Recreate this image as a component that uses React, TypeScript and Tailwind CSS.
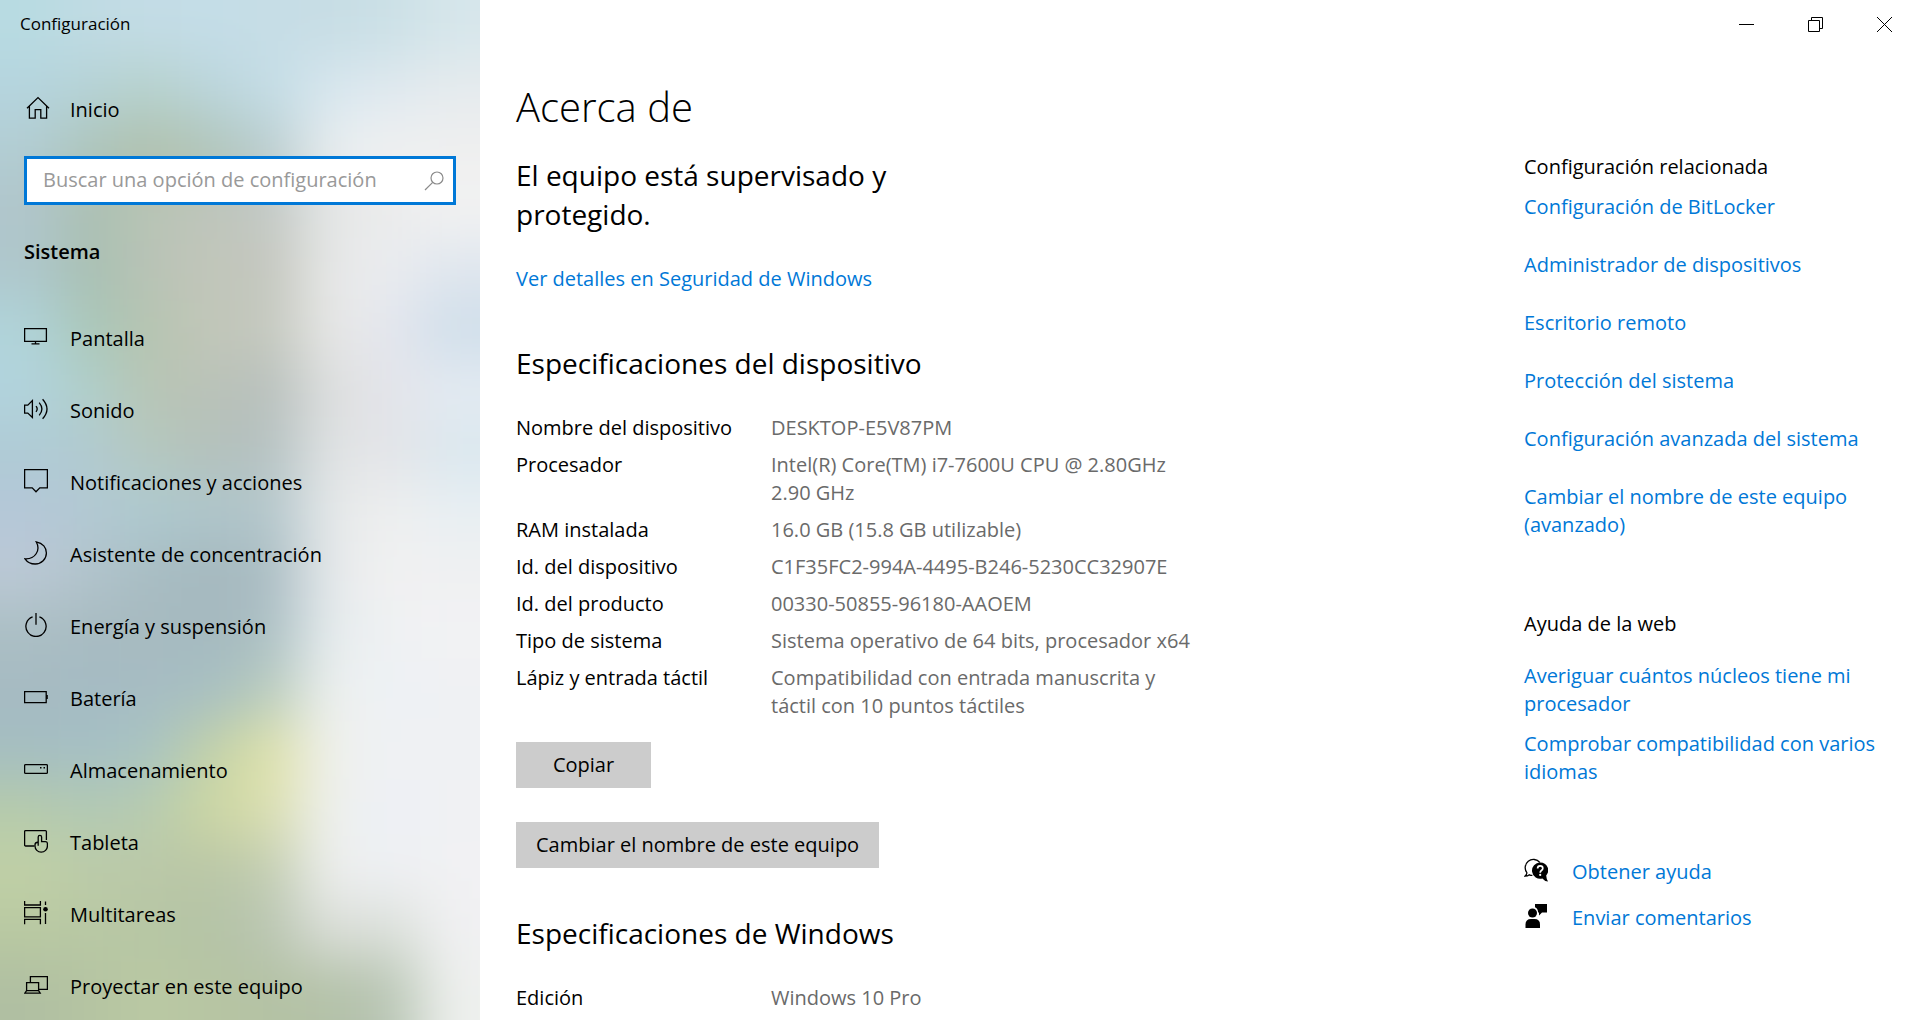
import React, { useState } from 'react';

interface IconProps {
  children: React.ReactNode;
}

interface NavItem {
  label: string;
  icon: React.ReactNode;
}

interface Spec {
  name: string;
  value: string;
}

// Colour samples of the blurred wallpaper, one entry per 60x60 cell
const wallpaper = [
  'b8dbe2 c0dbe3 c3dce6 c4dde7 c6dde6 c7dde5 cbe0e6 d6e6eb',
  'b5d4de b5d2d6 b6d2cc bbd5dc c4dde6 d8e7ef e0e9ef e6ebee',
  'b2cdd3 adc4ba b0c0ac b0c5b8 b8cccf e9eef0 f0f1f2 efefef',
  'b0c5cb abc0b2 b9c4b5 bfc5bb c3c8c4 e4e6e6 ebebeb f2f2f2',
  'aec7cc a8bfb2 b9c3b6 c1c6ba c3c6be e8e9e8 eaecf0 dfe6ee',
  'b0d4da a9c7b8 b6c4b0 c2c7b9 c4c8be e8e8e7 e4e6ee cfdeea',
  'b2d3dd b0cfca b8c5b4 bac2b8 b7bfbc dddfde e4e4ea e4ebf2',
  'afcbd5 b1cad0 b5c8be b3c0bb b5c1c1 e0e3e4 e3e4e8 dae7ee',
  'b4c7d8 b2c9d3 aecad0 afc6cb b4c7cc e6e9ea eeefef e8eff3',
  'bcc9d6 b2c4cc a8bdc3 a5b8be a9bcc2 e6e9eb f1f1f1 eff0f2',
  'abbfc4 a8bbc1 a7bac0 a5b9bf abbfc4 e6ecee eff1f3 f2f2f3',
  'a6bac2 a5bbc3 a6bcc3 a6bfc3 b8cbbd edf0ef edf1f5 eff1f3',
  'a4bec2 a5bfc5 a8c4c2 c2d1a8 dfe2a8 eff0ec eff1f4 eff1f3',
  'b6cbab b2c9b4 b8ccae cdd7a3 dbdfb0 eef0ee edf0f5 f0f1f3',
  'c0d0a6 bccba8 bbc8a8 b9c6a6 c2cdb2 eeefee eef0f4 f1f1f3',
  'b9c9a2 b8c8a4 b6c6a4 b4c3a6 b9c5b2 dcdfda dbe0da f0f0f2',
  'b0bfa2 b5c4a2 bac9a3 b7c5a3 b4c2a4 b3c1a8 b8c5b4 eef0ee',
].map((row) => row.split(' '));

function Wallpaper() {
  // two extra cells on every side keep the blur from fading at the edges
  const cells = [];
  for (let r = -2; r < 19; r++) {
    for (let c = -2; c < 10; c++) {
      const row = wallpaper[Math.min(16, Math.max(0, r))];
      const color = row[Math.min(7, Math.max(0, c))];
      cells.push(<rect key={`${r}-${c}`} x={c * 60} y={r * 60} width={61} height={61} fill={`#${color}`} />);
    }
  }

  return (
    <svg
      className="absolute inset-0 h-full w-full"
      viewBox="0 0 480 1020"
      preserveAspectRatio="none"
      aria-hidden="true"
    >
      <filter
        id="acrylic"
        filterUnits="userSpaceOnUse"
        x="-120"
        y="-120"
        width="720"
        height="1260"
        colorInterpolationFilters="sRGB"
      >
        <feGaussianBlur stdDeviation="28" />
      </filter>
      <g filter="url(#acrylic)">{cells}</g>
    </svg>
  );
}

function Icon({ children }: IconProps) {
  return (
    <svg
      className="h-6 w-6 shrink-0"
      viewBox="0 0 24 24"
      fill="none"
      stroke="currentColor"
      strokeWidth="1.3"
      aria-hidden="true"
    >
      {children}
    </svg>
  );
}

const navItems: NavItem[] = [
  {
    label: 'Pantalla',
    icon: <path d="M.6 3.6h21.8v12.8H.6zM11.5 16.4v2.2M7.5 18.9h8" />,
  },
  {
    label: 'Sonido',
    icon: (
      <path d="M.6 8.1h3.2L8.4 3.6v16.8l-4.6-4.3H.6zM12 9.2q2.4 2.8 0 5.6M15.2 5.6q5.4 6.4 0 12.8M18.6 2.2q8.8 9.8 0 19.6" />
    ),
  },
  {
    label: 'Notificaciones y acciones',
    icon: <path d="M.6.7h22.8v18.2h-7.6L12 22.8l-3.8-3.9H.6z" />,
  },
  {
    label: 'Asistente de concentración',
    icon: <path d="M12.2.8C19 2 22.4 6.8 22.4 12c0 6-4.9 11-11.2 11-4.2 0-8-2-10.2-5.2C11 18.4 17 9.4 12.2.8z" />,
  },
  {
    label: 'Energía y suspensión',
    icon: <path d="M12 0v11.8M15.4 3.9a10.1 10.1 0 1 1-6.8 0" />,
  },
  {
    label: 'Batería',
    icon: (
      <>
        <path d="M.6 6.6h21.6v11H.6z" />
        <path d="M22.2 10h1.6v4h-1.6z" fill="currentColor" stroke="none" />
      </>
    ),
  },
  {
    label: 'Almacenamiento',
    icon: (
      <>
        <rect x=".6" y="7.6" width="22.8" height="8.8" rx="1" />
        <path d="M16 10h1.5v1.5H16zM19.5 10H21v1.5h-1.5z" fill="currentColor" stroke="none" />
      </>
    ),
  },
  {
    label: 'Tableta',
    icon: (
      <>
        <path d="M10.5 17H1.6q-1 0-1-1V2.6q0-1 1-1h19.8q1 0 1 1V11" />
        <path d="M14.2 16.8V8a1.7 1.7 0 0 1 3.4 0v4.6h3.8q2 0 2 2V17a6.2 6.2 0 0 1-12.4 0v-1.2q0-2.4 3.2-2.8" />
      </>
    ),
  },
  {
    label: 'Multitareas',
    icon: (
      <>
        <path d="M.6 0v4h15.8V0M.6 6.6h15.8v9.2H.6zM.6 23.2v-4.8h15.8v4.8M21.5.6V4M21.5 12v11" />
        <circle cx="21.5" cy="8.2" r="2.3" fill="currentColor" stroke="none" />
      </>
    ),
  },
  {
    label: 'Proyectar en este equipo',
    icon: <path d="M6.4 9.5V3.6h17v12.8h-8.6M2.6 9.6h12v8h-12zM2.6 17.6L.8 20.2h15.4l-1.6-2.6" />,
  },
];

const deviceSpecs: Spec[] = [
  { name: 'Nombre del dispositivo', value: 'DESKTOP-E5V87PM' },
  { name: 'Procesador', value: 'Intel(R) Core(TM) i7-7600U CPU @ 2.80GHz 2.90 GHz' },
  { name: 'RAM instalada', value: '16.0 GB (15.8 GB utilizable)' },
  { name: 'Id. del dispositivo', value: 'C1F35FC2-994A-4495-B246-5230CC32907E' },
  { name: 'Id. del producto', value: '00330-50855-96180-AAOEM' },
  { name: 'Tipo de sistema', value: 'Sistema operativo de 64 bits, procesador x64' },
  { name: 'Lápiz y entrada táctil', value: 'Compatibilidad con entrada manuscrita y táctil con 10 puntos táctiles' },
];

const windowsSpecs: Spec[] = [{ name: 'Edición', value: 'Windows 10 Pro' }];

const relatedLinks = [
  'Configuración de BitLocker',
  'Administrador de dispositivos',
  'Escritorio remoto',
  'Protección del sistema',
  'Configuración avanzada del sistema',
  'Cambiar el nombre de este equipo (avanzado)',
];

const helpLinks = ['Averiguar cuántos núcleos tiene mi procesador', 'Comprobar compatibilidad con varios idiomas'];

function TextLink({ children }: { children: string }) {
  return (
    <a href="#" className="text-[#0078d7] hover:text-[#666666]">
      {children}
    </a>
  );
}

function SpecTable({ specs }: { specs: Spec[] }) {
  return (
    <table className="mt-[31px] table-fixed text-left">
      <tbody>
        {specs.map((spec) => (
          <tr key={spec.name} className="align-top">
            <th scope="row" className="w-[255px] pb-[9px] font-normal">
              {spec.name}
            </th>
            <td className="w-[420px] pb-[9px] text-[#6a6a6a]">{spec.value}</td>
          </tr>
        ))}
      </tbody>
    </table>
  );
}

function Sidebar() {
  const [query, setQuery] = useState<string>('');

  return (
    <aside className="relative w-1/4 shrink-0 overflow-hidden">
      <Wallpaper />
      <div className="relative">
        <div className="flex h-12 items-center px-5 text-[17px]">Configuración</div>
        <a href="#" className="mt-12 flex items-start gap-5 px-[26px]">
          <Icon>
            <path d="M1 12.3L12 1.6l11 10.7M3.4 10.2v12h5.8v-8.6h5.6v8.6h5.8v-12" />
          </Icon>
          Inicio
        </a>
        <div className="mx-6 mt-8 flex h-[49px] items-center border-3 border-[#0078d7] bg-white pr-[9px] pl-4">
          <input
            type="text"
            aria-label="Buscar una opción de configuración"
            placeholder="Buscar una opción de configuración"
            className="min-w-0 flex-1 pb-0.5 outline-none placeholder:text-[#999999]"
            value={query}
            onChange={(event) => setQuery(event.target.value)}
          />
          <button type="button" aria-label="Buscar" className="text-[#8a8a8a]">
            <svg className="h-5 w-5" viewBox="0 0 20 20" fill="none" stroke="currentColor" strokeWidth="1.2">
              <circle cx="13" cy="7" r="6" />
              <path d="M8.7 11.3L1 19" />
            </svg>
          </button>
        </div>
        <h2 className="mx-6 mt-[33px] font-semibold">Sistema</h2>
        <nav className="mt-[37px]">
          {navItems.map((item) => (
            <a key={item.label} href="#" className="flex h-18 items-center gap-[22px] px-6">
              <span className="mb-1">
                <Icon>{item.icon}</Icon>
              </span>
              {item.label}
            </a>
          ))}
        </nav>
      </div>
    </aside>
  );
}

function WindowControls() {
  const buttonClass = 'flex w-[69px] items-center justify-center';
  const iconClass = 'h-[15px] w-[15px]';

  return (
    <div className="flex h-12 justify-end pr-px">
      <button type="button" aria-label="Minimizar" className={buttonClass}>
        <svg className={iconClass} viewBox="0 0 15 15" stroke="currentColor">
          <path d="M0 7.5h15" />
        </svg>
      </button>
      <button type="button" aria-label="Restaurar" className={buttonClass}>
        <svg className={iconClass} viewBox="0 0 15 15" fill="none" stroke="currentColor">
          <path d="M.5 3.5h11v11H.5zM3.5 3.5v-3h11v11h-3" />
        </svg>
      </button>
      <button type="button" aria-label="Cerrar" className={buttonClass}>
        <svg className={iconClass} viewBox="0 0 15 15" stroke="currentColor">
          <path d="M0 0l15 15M15 0L0 15" />
        </svg>
      </button>
    </div>
  );
}

function About() {
  return (
    <main className="min-w-0 flex-1 pt-[35px] pl-9">
      <h1 className="text-[40px] leading-12 font-light">Acerca de</h1>
      <h2 className="mt-[25px] max-w-[420px] text-[28px] leading-[39px]">El equipo está supervisado y protegido.</h2>
      <p className="mt-[31px]">
        <TextLink>Ver detalles en Seguridad de Windows</TextLink>
      </p>

      <h2 className="mt-[51px] text-[28px] leading-[39px]">Especificaciones del dispositivo</h2>
      <SpecTable specs={deviceSpecs} />
      <div className="mt-[13px] flex flex-col items-start gap-[34px]">
        <button type="button" className="h-[46px] min-w-[135px] bg-[#cccccc] px-5">
          Copiar
        </button>
        <button type="button" className="h-[46px] bg-[#cccccc] px-5">
          Cambiar el nombre de este equipo
        </button>
      </div>

      <h2 className="mt-[46px] text-[28px] leading-[39px]">Especificaciones de Windows</h2>
      <SpecTable specs={windowsSpecs} />
    </main>
  );
}

function Related() {
  return (
    <aside className="w-[396px] shrink-0 pt-[105px] pr-8">
      <h3>Configuración relacionada</h3>
      <ul className="mt-3 flex flex-col gap-[30px]">
        {relatedLinks.map((link) => (
          <li key={link}>
            <TextLink>{link}</TextLink>
          </li>
        ))}
      </ul>

      <h3 className="mt-[71px]">Ayuda de la web</h3>
      <ul className="mt-6 flex flex-col gap-3">
        {helpLinks.map((link) => (
          <li key={link}>
            <TextLink>{link}</TextLink>
          </li>
        ))}
      </ul>

      <div className="mt-18 flex flex-col gap-[18px]">
        <div className="flex items-start gap-6">
          <Icon>
            <path d="M3 14.8A7.7 7.7 0 1 1 15.8 4.5M3 14.8q-.2 2-2.2 3.4 3 0 4.6-1.4 1.4.6 3 .6" />
            <path
              d="M16.2 4.4a7.8 7.8 0 0 1 6 13q.2 3.4 1.8 6.2-3.8-.6-5.6-3.1a8.2 8.2 0 1 1-2.2-16.1z"
              fill="currentColor"
              stroke="none"
            />
            <path d="M13.6 10.5q0-2.6 2.6-2.6t2.6 2.4q0 1.4-1.4 2.2-1.2.8-1.2 2.2" stroke="white" strokeWidth="1.7" />
            <circle cx="16.2" cy="16.9" r="1.1" fill="white" stroke="none" />
          </Icon>
          <TextLink>Obtener ayuda</TextLink>
        </div>
        <div className="flex items-start gap-6">
          <Icon>
            <g fill="currentColor" stroke="none">
              <circle cx="8.5" cy="9" r="4.5" />
              <path d="M1.5 24v-3.500q0-5.500 5.500-5.500h3.500q5.500 0 5.500 5.500V24z" />
              <path d="M11 0h12v8.500h-5L15 11.500V8.500h-.9Q14 4.600 11 3.200z" />
            </g>
          </Icon>
          <TextLink>Enviar comentarios</TextLink>
        </div>
      </div>
    </aside>
  );
}

function App() {
  return (
    <div className="flex h-screen overflow-hidden bg-white font-['Open_Sans',sans-serif] text-xl leading-7 text-black">
      <Sidebar />
      <div className="flex min-w-0 flex-1 flex-col">
        <WindowControls />
        <div className="flex min-h-0 flex-1">
          <About />
          <Related />
        </div>
      </div>
    </div>
  );
}

export default App;
